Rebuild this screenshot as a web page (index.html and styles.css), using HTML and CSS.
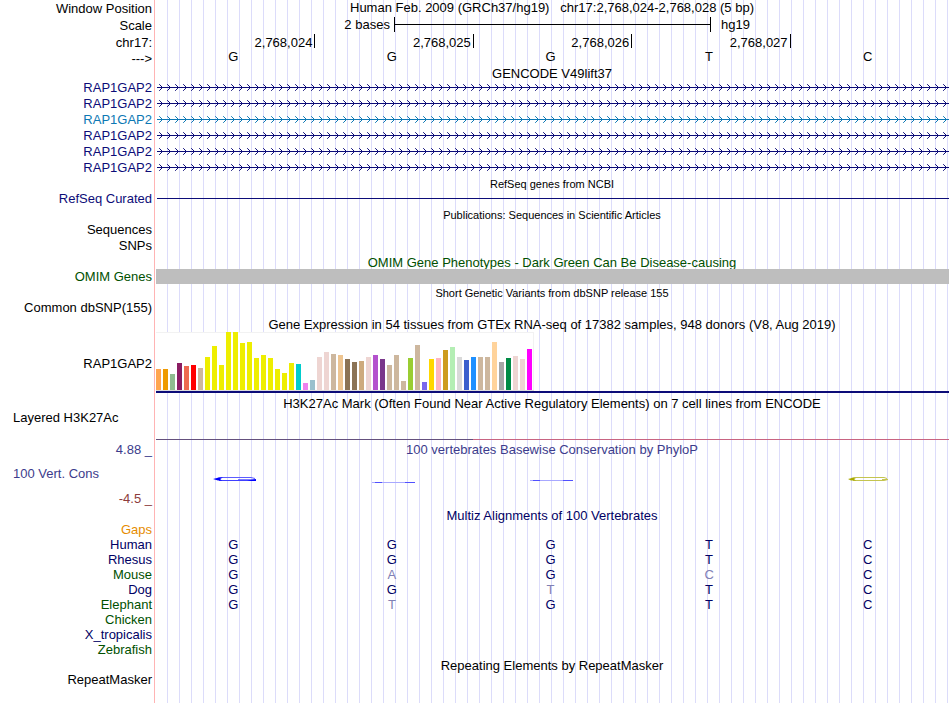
FILE: index.html
```html
<!DOCTYPE html>
<html lang="en">
<head>
  <meta charset="UTF-8">
  <title>Human chr17:2,768,024-2,768,028</title>
  <meta name="viewport" content="width=device-width, initial-scale=1.0">
  <link rel="stylesheet" href="styles.css">
</head>
<body>
  <svg class="defs" width="0" height="0">
    <defs>
      <pattern id="arrows" width="8" height="16" patternUnits="userSpaceOnUse">
        <path d="M0 7h8v1H0zM4 6h1v3H4zM3 5h1v1H3zM3 9h1v1H3z" fill="#0c0c78"/>
        <path d="M2 4h1v1H2zM2 10h1v1H2z" fill="#0c0c78" opacity="0.8"/>
      </pattern>
      <pattern id="arrows-light" width="8" height="16" patternUnits="userSpaceOnUse">
        <path d="M0 7h8v1H0zM4 6h1v3H4zM3 5h1v1H3zM3 9h1v1H3z" fill="#0c78b4"/>
        <path d="M2 4h1v1H2zM2 10h1v1H2z" fill="#0c78b4" opacity="0.8"/>
      </pattern>
    </defs>
  </svg>

  <main class="browser">
    <!-- ruler -->
    <div class="row ruler">
      <div class="label">Window Position</div>
      <div class="title">Human Feb. 2009 (GRCh37/hg19) &nbsp; chr17:2,768,024-2,768,028 (5 bp)</div>
    </div>
    <div class="row ruler">
      <div class="label">Scale</div>
      <div class="scale">
        <span class="scale-size">2 bases</span>
        <span class="scale-bar"></span>
        <span class="scale-db">hg19</span>
      </div>
    </div>
    <div class="row ruler">
      <div class="label">chr17:</div>
      <div class="ticks">
        <span>2,768,024</span><span>2,768,025</span><span>2,768,026</span><span>2,768,027</span>
      </div>
    </div>
    <div class="row sequence">
      <div class="label">---&gt;</div>
      <div class="bases"><span>G</span><span>G</span><span>G</span><span>T</span><span>C</span></div>
    </div>

    <!-- genes -->
    <div class="row heading short"><div class="title">GENCODE V49lift37</div></div>
    <div class="row navy">
      <div class="label">RAP1GAP2</div>
      <svg class="gene"><rect width="100%" height="16" fill="url(#arrows)"/></svg>
    </div>
    <div class="row navy">
      <div class="label">RAP1GAP2</div>
      <svg class="gene"><rect width="100%" height="16" fill="url(#arrows)"/></svg>
    </div>
    <div class="row light">
      <div class="label">RAP1GAP2</div>
      <svg class="gene"><rect width="100%" height="16" fill="url(#arrows-light)"/></svg>
    </div>
    <div class="row navy">
      <div class="label">RAP1GAP2</div>
      <svg class="gene"><rect width="100%" height="16" fill="url(#arrows)"/></svg>
    </div>
    <div class="row navy">
      <div class="label">RAP1GAP2</div>
      <svg class="gene"><rect width="100%" height="16" fill="url(#arrows)"/></svg>
    </div>
    <div class="row navy">
      <div class="label">RAP1GAP2</div>
      <svg class="gene"><rect width="100%" height="16" fill="url(#arrows)"/></svg>
    </div>

    <div class="row small"><div class="title">RefSeq genes from NCBI</div></div>
    <div class="row navy">
      <div class="label">RefSeq Curated</div>
      <svg class="gene"><rect y="7" width="100%" height="1" fill="#0c0c78"/></svg>
    </div>

    <div class="row small"><div class="title">Publications: Sequences in Scientific Articles</div></div>
    <div class="row"><div class="label">Sequences</div></div>
    <div class="row"><div class="label">SNPs</div></div>

    <div class="row heading green"><div class="title">OMIM Gene Phenotypes - Dark Green Can Be Disease-causing</div></div>
    <div class="row omim green">
      <div class="label">OMIM Genes</div>
      <div class="omim-bar"></div>
    </div>

    <div class="row small dbsnp"><div class="title">Short Genetic Variants from dbSNP release 155</div></div>
    <div class="row"><div class="label">Common dbSNP(155)</div></div>

    <!-- expression -->
    <div class="row expression"><div class="title">Gene Expression in 54 tissues from GTEx RNA-seq of 17382 samples, 948 donors (V8, Aug 2019)</div></div>
    <div class="row gtex">
      <div class="label">RAP1GAP2</div>
      <div class="gtex-line">
        <div class="gtex-bars" id="gtex"></div>
      </div>
    </div>

    <!-- regulation -->
    <div class="row h3k"><div class="title">H3K27Ac Mark (Often Found Near Active Regulatory Elements) on 7 cell lines from ENCODE</div></div>
    <div class="row layered">
      <div class="label left">Layered H3K27Ac</div>
      <div class="layered-line"></div>
    </div>

    <!-- conservation -->
    <div class="row cons-top phylo">
      <div class="label">4.88 _</div>
      <div class="title">100 vertebrates Basewise Conservation by PhyloP</div>
    </div>
    <div class="row cons phylo">
      <div class="label left">100 Vert. Cons</div>
      <div class="logos">
        <svg width="44" height="30" viewBox="0 0 44 30">
          <path d="M4 19.5 8 18.5H38L42 19.5" fill="none" stroke="#5c5cff"/>
          <path d="M6 21.5H40" fill="none" stroke="#4040ff"/>
          <path d="M0 20 6 18.5H10L7 20 9 21.5H5ZM25 20.5H38L43 20V22H38L34 21H25Z" fill="#0000ff"/>
        </svg>
        <svg width="44" height="30" viewBox="0 0 44 30">
          <path d="M0 23.5H43" stroke="#a8a8ff"/>
          <path d="M3 23.5H10M33 23.5H43" stroke="#5050ff"/>
        </svg>
        <svg width="44" height="30" viewBox="0 0 44 30">
          <path d="M0 21.5H43" stroke="#a8a8ff"/>
          <path d="M3 21.5H10M33 21.5H43" stroke="#5050ff"/>
        </svg>
        <svg width="44" height="30" viewBox="0 0 44 30"></svg>
        <svg width="44" height="30" viewBox="0 0 44 30">
          <path d="M3 19.5 6 18.5H36L39 19.5M5 21.5H36L40 20.5H34" fill="none" stroke="#c4c450"/>
          <path d="M0 20 4 19H8L6 20 8 21.5H3Z" fill="#a8a800"/>
        </svg>
      </div>
    </div>
    <div class="row cons-bottom"><div class="label">-4.5 _</div></div>

    <!-- alignments -->
    <div class="row heading short multiz"><div class="title">Multiz Alignments of 100 Vertebrates</div></div>
    <div class="row species gaps"><div class="label">Gaps</div></div>
    <div class="row species multiz">
      <div class="label">Human</div>
      <div class="bases"><span>G</span><span>G</span><span>G</span><span>T</span><span>C</span></div>
    </div>
    <div class="row species multiz">
      <div class="label">Rhesus</div>
      <div class="bases"><span>G</span><span>G</span><span>G</span><span>T</span><span>C</span></div>
    </div>
    <div class="row species multiz">
      <div class="label green">Mouse</div>
      <div class="bases"><span>G</span><span class="diff">A</span><span>G</span><span class="diff">C</span><span>C</span></div>
    </div>
    <div class="row species multiz">
      <div class="label">Dog</div>
      <div class="bases"><span>G</span><span>G</span><span class="diff">T</span><span>T</span><span>C</span></div>
    </div>
    <div class="row species multiz">
      <div class="label green">Elephant</div>
      <div class="bases"><span>G</span><span class="diff">T</span><span>G</span><span>T</span><span>C</span></div>
    </div>
    <div class="row species green"><div class="label">Chicken</div></div>
    <div class="row species multiz"><div class="label">X_tropicalis</div></div>
    <div class="row species green"><div class="label">Zebrafish</div></div>

    <div class="row heading"><div class="title">Repeating Elements by RepeatMasker</div></div>
    <div class="row"><div class="label">RepeatMasker</div></div>
  </main>

  <script src="gtex.js"></script>
</body>
</html>
```
FILE: styles.css
```css
* {
  box-sizing: border-box;
}

body {
  margin: 0;
  background-color: #fff;
  color: #000;
  font-family: "Liberation Sans", Arial, Helvetica, sans-serif;
  font-size: 13px;
}

.defs {
  display: block;
}

/* pink line, plain label column, then a guide line every 12px */
.browser {
  min-height: 100vh;
  margin-right: 1px;
  background-image:
    linear-gradient(#ffb4b4, #ffb4b4),
    linear-gradient(#fff, #fff),
    linear-gradient(to right, #dcdcfa 1px, transparent 1px);
  background-size: 1px 100%, 156px 100%, 12px 100%;
  background-position: 154px 0, 0 0, 155px 0;
  background-repeat: no-repeat, no-repeat, repeat-x;
}

.row {
  display: grid;
  grid-template-columns: 155px minmax(0, 1fr);
  height: 16px;
  line-height: 16px;
  white-space: nowrap;
}

.label {
  padding-right: 3px;
  text-align: right;
}

.label.left {
  padding-left: 13px;
  text-align: left;
}

.title {
  grid-column: 2;
  text-align: center;
}

.heading {
  height: 15px;
  line-height: 17px;
}

.short {
  height: 14px;
  line-height: 16px;
}

.small {
  height: 15px;
  line-height: 17px;
  font-size: 11px;
}

.dbsnp {
  height: 16px;
  line-height: 18px;
}

/* ruler */
.ruler {
  height: 17px;
  line-height: 17px;
}

.ruler .title {
  line-height: 15px;
}

.scale {
  display: grid;
  grid-template-columns: 3fr 4fr 3fr;
  margin-left: 1px;
}

.scale-size {
  padding-right: 4px;
  text-align: right;
}

.scale-size,
.scale-db {
  line-height: 16px;
}

.scale-db {
  padding-left: 10px;
}

.scale-bar {
  height: 15px;
  border-left: 1px solid #000;
  border-right: 1px solid #000;
  background: linear-gradient(#000, #000) 0 7px / 100% 1px no-repeat;
}

.ticks {
  display: grid;
  grid-template-columns: repeat(5, 1fr);
  margin-left: 2px;
}

.ticks span {
  height: 14px;
  padding-right: 2px;
  text-align: right;
  border-right: 1px solid #000;
}

.sequence {
  height: 15px;
}

.sequence .bases {
  line-height: 12px;
}

.bases {
  display: grid;
  grid-template-columns: repeat(5, 1fr);
  margin: 0 2px 0 -1px;
  text-align: center;
}

/* genes */
.gene {
  display: block;
  width: calc(100% - 2px);
  height: 16px;
  margin-left: 2px;
}

.navy {
  color: #0c0c78;
}

.light {
  color: #0c78b4;
}

.green {
  color: #005000;
}

.omim {
  height: 15px;
  line-height: 15px;
}

.omim-bar {
  margin-left: 1px;
  background-color: #bebebe;
}

/* expression */
.expression {
  line-height: 18px;
}

.gtex {
  height: 61px;
  line-height: 64px;
}

.gtex-line {
  height: 61px;
  margin-left: 1px;
  border-bottom: 2px solid #0c0c78;
}

.gtex-bars {
  display: flex;
  align-items: flex-end;
  gap: 2px;
  width: 378px;
  height: 58px;
  background-color: #fff;
  box-shadow: inset 0 1px #f2f2f2, inset -1px 0 #f2f2f2, 0 1px #dcdcdc;
}

.gtex-bars span {
  width: 5px;
}

.h3k {
  height: 18px;
  line-height: 22px;
}

.layered {
  height: 29px;
  line-height: 14px;
}

.layered-line {
  height: 29px;
  margin-left: 1px;
  background: linear-gradient(to right, #64507d 40%, #c86482 40%) 0 100% / 100% 1px no-repeat;
}

/* conservation */
.phylo {
  color: #3c3c8c;
}

.cons-top {
  height: 19px;
  line-height: 19px;
}

.cons {
  height: 32px;
  line-height: 30px;
}

.logos {
  display: grid;
  grid-template-columns: repeat(5, 1fr);
  justify-items: center;
  margin-left: 1px;
}

.cons-bottom {
  height: 17px;
  line-height: 16px;
  color: #8c3c3c;
}

.multiz {
  color: #000064;
}

.gaps {
  color: #e68c00;
}

.species {
  height: 15px;
  line-height: 15px;
}

.diff {
  color: #8080b4;
}
```
FILE: gtex.js
```javascript
// [height, colour] of each tissue bar
const tissues = [
  [21, '#ffa54f'], [21, '#ee9a00'], [16, '#8fbc8f'], [27, '#8b1c62'], [24, '#ee6a50'], [25, '#ff0000'],
  [22, '#cdb79e'], [33, '#eeee00'], [44, '#eeee00'], [25, '#eeee00'], [58, '#eeee00'], [58, '#eeee00'],
  [47, '#eeee00'], [48, '#eeee00'], [32, '#eeee00'], [35, '#eeee00'], [32, '#eeee00'], [21, '#eeee00'],
  [17, '#eeee00'], [27, '#eeee00'], [26, '#00cdcd'], [7, '#ee82ee'], [10, '#9ac0cd'], [33, '#eed5d2'],
  [38, '#eed5d2'], [36, '#cdb79e'], [35, '#eec591'], [31, '#8b7355'], [28, '#8b7355'], [29, '#cdaa7d'],
  [33, '#eed5d2'], [35, '#b452cd'], [31, '#7a378b'], [25, '#cdb79e'], [35, '#cdb79e'], [9, '#cdb79e'],
  [32, '#9acd32'], [45, '#cdb79e'], [8, '#7a67ee'], [31, '#ffd700'], [32, '#ffb6c1'], [40, '#cd9b1d'],
  [43, '#b4eeb4'], [33, '#d9d9d9'], [30, '#3a5fcd'], [33, '#1e90ff'], [33, '#cdb79e'], [33, '#cdb79e'],
  [48, '#ffd39b'], [28, '#a6a6a6'], [32, '#008b45'], [34, '#eed5d2'], [31, '#eed5d2'], [41, '#ff00ff']
];

const chart = document.getElementById('gtex');
tissues.forEach(([height, colour]) => {
  const bar = document.createElement('span');
  bar.style.height = height + 'px';
  bar.style.backgroundColor = colour;
  chart.appendChild(bar);
});
```
